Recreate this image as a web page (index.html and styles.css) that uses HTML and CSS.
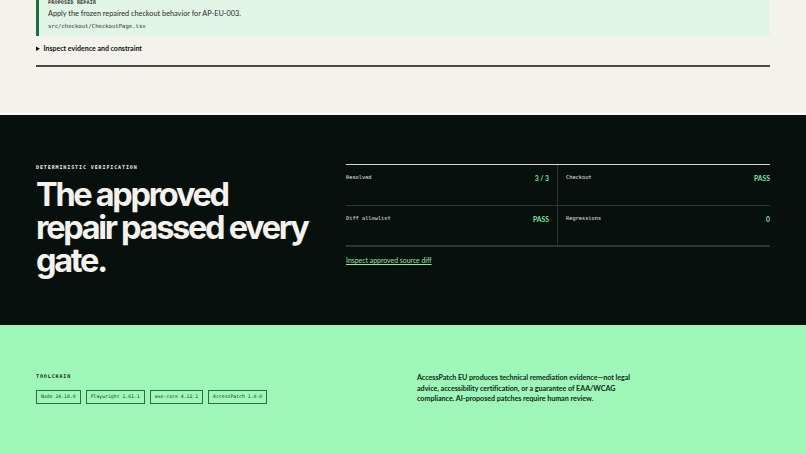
FILE: index.html
```html
<!DOCTYPE html>
<html lang="en">
<head>
<meta charset="utf-8">
<title>AccessPatch EU</title>
<link rel="stylesheet" href="styles.css">
</head>
<body>
<section class="repair">
  <div class="wrap">
    <div class="card">
      <div class="card-label">PROPOSED REPAIR</div>
      <p class="card-text">Apply the frozen repaired checkout behavior for AP-EU-003.</p>
      <code class="card-path">src/checkout/CheckoutPage.tsx</code>
    </div>
    <details class="evidence">
      <summary>Inspect evidence and constraint</summary>
    </details>
    <hr class="rule">
  </div>
</section>
<section class="verify">
  <div class="wrap verify-grid">
    <div class="verify-left">
      <div class="eyebrow">DETERMINISTIC VERIFICATION</div>
      <h2 class="headline">The approved<br>repair passed every gate.</h2>
    </div>
    <div class="verify-right">
      <div class="gates">
        <div class="gate gate-l"><span class="gate-label">Resolved</span><span class="gate-value">3 / 3</span></div>
        <div class="gate gate-r"><span class="gate-label">Checkout</span><span class="gate-value">PASS</span></div>
        <div class="gate gate-l gate-b"><span class="gate-label">Diff allowlist</span><span class="gate-value">PASS</span></div>
        <div class="gate gate-r gate-b"><span class="gate-label">Regressions</span><span class="gate-value">0</span></div>
      </div>
      <a class="diff-link" href="#">Inspect approved source diff</a>
    </div>
  </div>
</section>
<section class="tools">
  <div class="wrap tools-grid">
    <div>
      <div class="eyebrow eyebrow-dark">TOOLCHAIN</div>
      <div class="chips">
        <span class="chip">Node 24.18.0</span>
        <span class="chip">Playwright 1.61.1</span>
        <span class="chip">axe-core 4.12.1</span>
        <span class="chip">AccessPatch 1.0.0</span>
      </div>
    </div>
    <p class="disclaimer">AccessPatch EU produces technical remediation evidence—not legal advice, accessibility certification, or a guarantee of EAA/WCAG compliance. AI-proposed patches require human review.</p>
  </div>
</section>
</body>
</html>
```

FILE: styles.css
```css
* { box-sizing: border-box; }
html, body { margin: 0; padding: 0; }
body {
  font-family: Lato, "Noto Sans", sans-serif;
  background: #f4f2ec;
  color: #111;
  width: 806px;
  overflow: hidden;
}
.wrap { padding: 0 36px; }

/* top */
.repair {
  background: #f4f2ec;
  height: 115px;
  border-bottom: 2px solid #fbfaf6;
}
.card {
  background: #e0f5e6;
  border-left: 3px solid #1f6b3f;
  padding: 0 9px 0 9px;
  height: 36px;
}
.card-label {
  font-family: "DejaVu Sans Mono", monospace;
  font-size: 5px;
  font-weight: 700;
  line-height: 5px;
  color: #333;
  letter-spacing: 0.2px;
}
.card-text {
  margin: 3px 0 0;
  font-size: 7.3px;
  line-height: 11px;
  color: #2a2a2a;
}
.card-path {
  display: block;
  margin-top: 3px;
  font-family: "DejaVu Sans Mono", monospace;
  font-size: 5.6px;
  line-height: 8px;
  color: #333;
}
.evidence { margin-top: 7px; }
.evidence summary {
  font-size: 7px;
  font-weight: 700;
  line-height: 10px;
  color: #111;
  cursor: pointer;
}
.rule {
  margin: 12px 0 0;
  border: 0;
  height: 2px;
  background: #4a4a46;
}

/* dark */
.verify {
  background: #08100d;
  height: 210px;
  padding-top: 49px;
  color: #f4f2ec;
}
.verify-grid {
  display: grid;
  grid-template-columns: 302px 1fr;
  column-gap: 8px;
}
.eyebrow {
  font-family: "DejaVu Sans Mono", monospace;
  font-size: 5px;
  font-weight: 700;
  letter-spacing: 0.9px;
  line-height: 7px;
  color: #f4f2ec;
}
.headline {
  margin: 7px 0 0;
  font-family: Inter, sans-serif;
  font-weight: 700;
  font-size: 32.5px;
  line-height: 33px;
  letter-spacing: -2.3px;
  color: #f4f2ec;
}
.gates {
  display: grid;
  grid-template-columns: 1fr 1fr;
  border-top: 1px solid #d8d8d0;
  border-bottom: 2px solid #2e3532;
}
.gate {
  height: 40px;
  display: flex;
  justify-content: space-between;
  align-items: flex-start;
  padding-top: 8px;
}
.gate-l { padding-right: 8px; border-right: 1px solid #2e3532; }
.gate-r { padding-left: 8px; }
.gate-b { border-top: 1px solid #2e3532; }
.gate-label {
  font-family: "DejaVu Sans Mono", monospace;
  font-size: 5.3px;
  line-height: 8px;
  color: #e8e8e0;
}
.gate-value {
  font-size: 6.8px;
  font-weight: 700;
  line-height: 9px;
  color: #7ee2a0;
  margin-top: 1px;
}
.diff-link {
  display: inline-block;
  margin-top: 4px;
  font-size: 6.9px;
  line-height: 10px;
  color: #8ee6a8;
  text-decoration: underline;
}

/* green */
.tools {
  background: #9ef7b8;
  height: 128px;
  padding-top: 48px;
  color: #0f2a1a;
}
.tools-grid {
  display: grid;
  grid-template-columns: 353px 1fr;
  column-gap: 28px;
}
.eyebrow-dark { color: #0f2a1a; }
.chips {
  display: flex;
  gap: 5px;
  margin-top: 10px;
}
.chip {
  font-family: "DejaVu Sans Mono", monospace;
  font-size: 4.8px;
  line-height: 12px;
  padding: 0 4px;
  border: 1px solid #2d6b45;
  color: #1a3a26;
}
.disclaimer {
  margin: 0;
  max-width: 220px;
  font-size: 7.2px;
  font-weight: 700;
  line-height: 10.5px;
  letter-spacing: -0.05px;
  color: #0f2a1a;
}
```
